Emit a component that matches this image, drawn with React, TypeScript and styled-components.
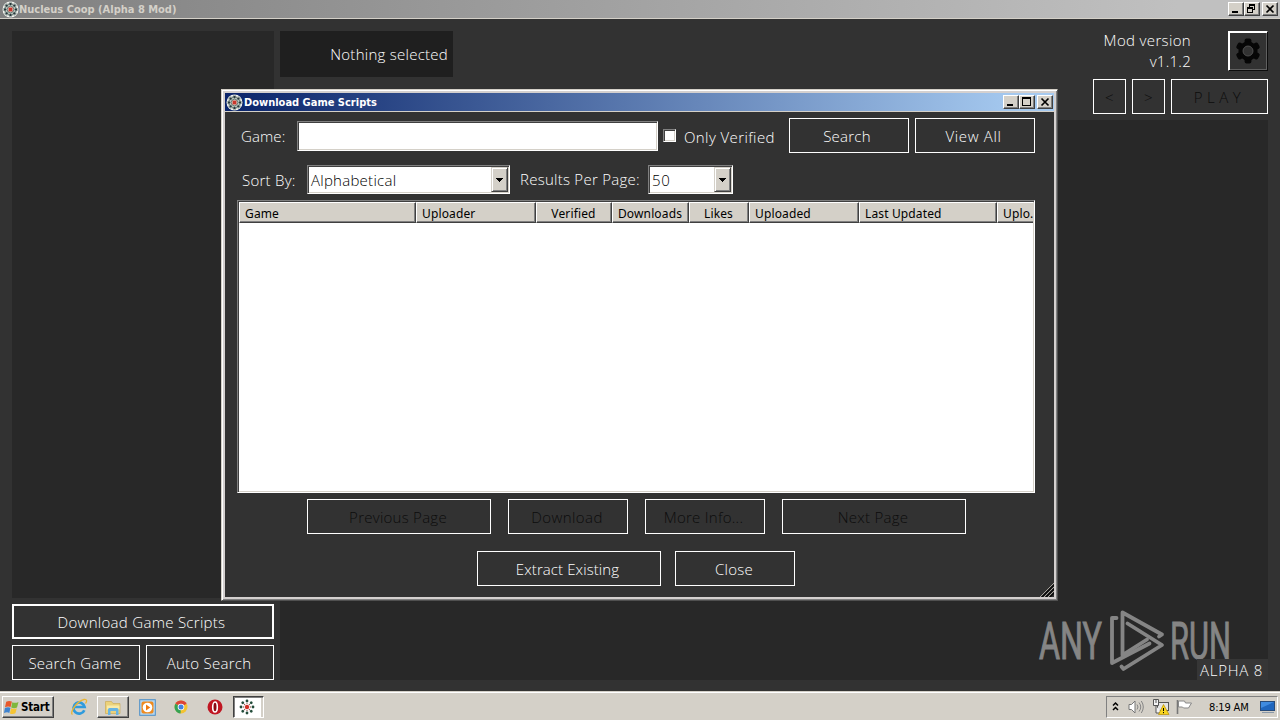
import React from 'react';
import styled, { createGlobalStyle, css } from 'styled-components';

const LIGHT = '"Open Sans", "Noto Sans", sans-serif';
const TAHOMA = '"DejaVu Sans Condensed", "DejaVu Sans", "Noto Sans", sans-serif';

const GlobalStyle = createGlobalStyle`
  * {
    box-sizing: border-box;
  }

  body {
    margin: 0;
    overflow: hidden;
    background: #323232;
  }

  button {
    padding: 0;
    margin: 0;
  }
`;

interface LabelProps {
  $spacing?: number;
  $shift?: number;
}

const Label = styled.span<LabelProps>`
  font-family: ${LIGHT};
  font-weight: 300;
  font-size: 15px;
  letter-spacing: ${({ $spacing = 0.26 }) => $spacing}px;
  margin-left: ${({ $shift = 0 }) => $shift}px;
  line-height: 20px;
  white-space: nowrap;
  color: inherit;
`;

const Desktop = styled.div`
  position: relative;
  display: flex;
  flex-direction: column;
  width: 1280px;
  height: 720px;
  overflow: hidden;
  background: #323232;
  color: #ffffff;
`;

/* Window chrome */

const TitleBar = styled.div<{ $active?: boolean }>`
  display: flex;
  align-items: center;
  flex: none;
  height: 19px;
  padding: 0 ${({ $active }) => ($active ? 1 : 2)}px;
  border-bottom: 1px solid #d4d0c8;
  background: ${({ $active }) =>
    $active
      ? 'linear-gradient(90deg, #0a246a 0%, #a6caf0 96%)'
      : 'linear-gradient(90deg, #808080 0%, #c0c0c0 92%)'};
`;

const TitleText = styled.span<{ $active?: boolean }>`
  flex: 1;
  padding-left: ${({ $active }) => ($active ? 1 : 0)}px;
  font-family: ${TAHOMA};
  font-size: 11px;
  font-weight: 700;
  line-height: 17px;
  white-space: nowrap;
  color: ${({ $active }) => ($active ? '#ffffff' : '#d4d0c8')};
`;

const CaptionGroup = styled.div`
  display: flex;
  margin-right: 2px;
`;

const CaptionButton = styled.button`
  display: block;
  width: 16px;
  height: 14px;
  border: 1px solid;
  border-color: #ffffff #404040 #404040 #ffffff;
  box-shadow: inset -1px -1px 0 #808080;
  background: #d4d0c8;

  svg {
    display: block;
  }
`;

/* Main window */

const MainBody = styled.main`
  flex: 1;
  display: flex;
  gap: 6px;
  padding: 12px 12px 11px;
`;

const Sidebar = styled.aside`
  display: flex;
  flex-direction: column;
  gap: 6px;
  width: 262px;
`;

const GameList = styled.div`
  flex: 1;
  background: #282828;
`;

const ButtonRow = styled.div`
  display: flex;
  gap: 6px;
`;

const FlatButton = styled.button<{ $width: number; $focused?: boolean }>`
  display: flex;
  align-items: center;
  justify-content: center;
  flex: none;
  width: ${({ $width }) => $width}px;
  height: 35px;
  border: ${({ $focused }) => ($focused ? 2 : 1)}px solid #ffffff;
  background: #323232;
  color: #ffffff;

  &:disabled {
    color: #0c0c0c;
  }
`;

const Content = styled.section`
  flex: 1;
  display: flex;
  flex-direction: column;
`;

const TopStrip = styled.div`
  display: flex;
  justify-content: space-between;
  height: 89px;
`;

const Selection = styled.div`
  display: flex;
  align-items: center;
  justify-content: flex-end;
  width: 173px;
  height: 46px;
  padding: 0 5px 1px 0;
  background: #1f1f1f;
`;

const HeaderTools = styled.div`
  display: flex;
  flex-direction: column;
  align-items: flex-end;
  gap: 8px;
`;

const VersionRow = styled.div`
  display: flex;
  gap: 37px;
  height: 40px;
`;

const Version = styled.div`
  display: flex;
  flex-direction: column;
  align-items: flex-end;
  gap: 1px;
  margin-top: -1px;
`;

const GearButton = styled.button`
  display: flex;
  align-items: center;
  justify-content: center;
  width: 40px;
  height: 40px;
  border: 1px solid;
  border-color: #ffffff #0c0c0c #0c0c0c #ffffff;
  box-shadow: inset 1px 1px 0 #ffffff, inset -1px -1px 0 #606060;
  background: #323232;
`;

const Canvas = styled.div`
  position: relative;
  flex: 1;
  background: #282828;
`;

const Watermark = styled.svg`
  position: absolute;
  right: 36px;
  bottom: 6px;
  overflow: visible;
`;

const VersionBadge = styled.div`
  position: absolute;
  right: 0;
  bottom: 0;
  display: flex;
  align-items: center;
  justify-content: center;
  width: 71px;
  height: 21px;
  padding: 1px 2px 0 0;
  background: #363636;
`;

/* Dialog */

const Dialog = styled.div`
  position: absolute;
  left: 221px;
  top: 89px;
  display: flex;
  flex-direction: column;
  width: 837px;
  height: 512px;
  padding: 3px;
  border: 1px solid;
  border-color: #d4d0c8 #505050 #505050 #d4d0c8;
  box-shadow: inset 1px 1px 0 #ffffff, inset -1px -1px 0 #808080, inset 0 0 0 3px #d4d0cf;
  background: #323232;
`;

const DialogBody = styled.div`
  flex: 1;
  display: flex;
  flex-direction: column;
  padding: 6px 19px 11px 12px;
`;

const SearchRow = styled.div`
  display: flex;
  align-items: center;
  height: 35px;
  padding-left: 3px;
`;

const SortRow = styled.div`
  display: flex;
  align-items: center;
  height: 29px;
  margin-top: 12px;
  padding-left: 4px;
`;

const FieldLabel = styled.div<{ $width: number; $drop?: number }>`
  display: flex;
  flex: none;
  width: ${({ $width }) => $width}px;
  margin-top: ${({ $drop = 0 }) => $drop}px;
`;

const sunken = css`
  border: 1px solid;
  border-color: #808080 #ffffff #ffffff #808080;
  box-shadow: inset 1px 1px 0 #404040, inset -1px -1px 0 #d4d0c8;
`;

const TextInput = styled.input`
  ${sunken}
  flex: none;
  width: 361px;
  height: 30px;
  padding: 0 6px;
  background: #ffffff;
  outline: none;
  font: 300 15px ${LIGHT};
`;

const CheckBox = styled.div`
  ${sunken}
  flex: none;
  width: 13px;
  height: 13px;
  margin: 0 8px 0 5px;
  background: #ffffff;
`;

const Combo = styled.div<{ $width: number }>`
  ${sunken}
  display: flex;
  align-items: center;
  justify-content: space-between;
  flex: none;
  width: ${({ $width }) => $width}px;
  height: 29px;
  padding: 1px 1px 1px 3px;
  background: #ffffff;
  color: #000000;
`;

const ComboArrow = styled.div`
  display: flex;
  align-items: center;
  justify-content: center;
  width: 17px;
  height: 25px;
  border: 1px solid;
  border-color: #d4d0c8 #404040 #404040 #d4d0c8;
  box-shadow: inset 1px 1px 0 #ffffff, inset -1px -1px 0 #808080;
  background: #d4d0c8;
`;

const Table = styled.div`
  ${sunken}
  width: 798px;
  height: 293px;
  margin-top: 6px;
  padding: 1px;
  background: #ffffff;
`;

const TableHead = styled.div`
  display: flex;
  height: 21px;
  overflow: hidden;
`;

const HeadCell = styled.div<{ $width: number; $center?: boolean }>`
  flex: none;
  display: flex;
  align-items: center;
  justify-content: ${({ $center }) => ($center ? 'center' : 'flex-start')};
  width: ${({ $width }) => $width}px;
  padding: 2px ${({ $center }) => ($center ? 1 : 0)}px 0 ${({ $center }) => ($center ? 0 : 5)}px;
  border: 1px solid;
  border-color: #ffffff #404040 #404040 #ffffff;
  box-shadow: inset -1px -1px 0 #808080;
  background: #d4d0c8;
  color: #000000;
`;

const HeadText = styled.span`
  font-family: "Noto Sans", "Open Sans", sans-serif;
  font-size: 12px;
  line-height: 16px;
  letter-spacing: 0.14px;
  white-space: nowrap;
`;

const Pager = styled.div`
  display: flex;
  gap: 17px;
  margin-top: 6px;
  padding-left: 70px;
`;

const Footer = styled.div`
  display: flex;
  gap: 14px;
  margin-top: 17px;
  padding-left: 240px;
`;

const Grip = styled.svg`
  position: absolute;
  right: 3px;
  bottom: 3px;
`;

/* Taskbar */

const Taskbar = styled.footer`
  display: flex;
  align-items: center;
  flex: none;
  height: 29px;
  padding: 2px 2px 0;
  border-top: 1px solid #d4d0c8;
  box-shadow: inset 0 1px 0 #ffffff;
  background: #d4d0c8;
  color: #000000;
`;

const StartButton = styled.button`
  display: flex;
  align-items: center;
  gap: 2px;
  width: 52px;
  height: 22px;
  padding-left: 1px;
  border: 1px solid;
  border-color: #ffffff #404040 #404040 #ffffff;
  box-shadow: inset -1px -1px 0 #808080;
  background: #d4d0c8;
  font: 700 11.5px ${TAHOMA};
  letter-spacing: -0.2px;
  color: #000000;
`;

const QuickLaunch = styled.div`
  display: flex;
  margin-left: 9px;
  gap: 2px;
`;

const TaskButton = styled.div<{ $state?: 'raised' | 'pressed' }>`
  display: flex;
  align-items: center;
  justify-content: center;
  width: 32px;
  height: 22px;
  border: 1px solid transparent;

  ${({ $state }) =>
    $state === 'raised' &&
    css`
      border-color: #ffffff #404040 #404040 #ffffff;
      box-shadow: inset -1px -1px 0 #808080;
    `}

  ${({ $state }) =>
    $state === 'pressed' &&
    css`
      width: 31px;
      border-color: #404040 #ffffff #ffffff #404040;
      box-shadow: inset 1px 1px 0 #808080, inset -2px 0 0 #d4d0c8;
      background: #ffffff;
      padding-right: 3px;
    `}
`;

const Tray = styled.div`
  display: flex;
  align-items: center;
  width: 172px;
  height: 22px;
  margin-left: auto;
  padding-left: 5px;
  border: 1px solid;
  border-color: #808080 #ffffff #ffffff #808080;
`;

const Clock = styled.span`
  width: 51px;
  margin-left: 12px;
  font-family: ${TAHOMA};
  font-size: 11px;
  letter-spacing: -0.15px;
  white-space: nowrap;
`;

const petals = [0, 45, 90, 135, 180, 225, 270, 315];

const AppIcon = () => (
  <svg width="17" height="17" viewBox="0 0 17 17">
    <circle cx="8.5" cy="8.5" r="8" fill="#f4f4f0" />
    {[0, 45, 90, 135].map((angle) => (
      <ellipse
        key={angle}
        cx="8.5"
        cy="8.5"
        rx="2.9"
        ry="7.3"
        fill="none"
        stroke="#4e665e"
        strokeWidth="0.6"
        transform={`rotate(${angle} 8.5 8.5)`}
      />
    ))}
    {petals.map((angle) => (
      <rect
        key={angle}
        x="7.4"
        y="2"
        width="2.2"
        height="2"
        fill="#26383c"
        transform={`rotate(${angle} 8.5 8.5)`}
      />
    ))}
    <rect x="6.5" y="6.5" width="4" height="4" fill="#c8382c" />
  </svg>
);

const FlowerIcon = () => (
  <svg width="16" height="16" viewBox="0 0 16 16">
    {petals.map((angle) => (
      <g key={angle} transform={`rotate(${angle} 8 8)`}>
        <circle cx="8" cy="2" r="1.4" fill="#234c3a" />
        <circle cx="8" cy="4.6" r="0.7" fill="#9a5c54" />
      </g>
    ))}
    <circle cx="8" cy="8" r="2.2" fill="#d33027" />
  </svg>
);

const MinimizeIcon = () => (
  <svg width="14" height="12" shapeRendering="crispEdges">
    <rect x="3" y="8" width="6" height="2" />
  </svg>
);

const MaximizeIcon = () => (
  <svg width="14" height="12" shapeRendering="crispEdges">
    <path d="M2 1h9v9h-9zM3 3v6h7v-6z" fillRule="evenodd" />
  </svg>
);

const RestoreIcon = () => (
  <svg width="14" height="12" shapeRendering="crispEdges">
    <path d="M4 1h6v6h-2v-1h1v-3h-4v1h-1zM2 4h6v6h-6zM3 6v3h4v-3z" fillRule="evenodd" />
  </svg>
);

const CloseIcon = () => (
  <svg width="14" height="12">
    <path d="M3.5 2.5l7 7M10.5 2.5l-7 7" stroke="#000" strokeWidth="1.7" />
  </svg>
);

const GearIcon = () => (
  <svg width="26" height="26" viewBox="0 0 26 26">
    {[0, 60, 120].map((angle) => (
      <rect
        key={angle}
        x="9.6"
        y="0.6"
        width="6.8"
        height="24.8"
        rx="2"
        fill="#060606"
        transform={`rotate(${angle} 13 13)`}
      />
    ))}
    <circle cx="13" cy="13" r="9.6" fill="#060606" />
    <circle cx="13" cy="13" r="5" fill="#323232" stroke="#5a5a5a" strokeWidth="0.8" />
  </svg>
);

const Arrow = () => (
  <svg width="8" height="4" viewBox="0 0 8 4" shapeRendering="crispEdges">
    <path d="M0 0h7v1h-1v1h-1v1h-1v1h-1v-1h-1v-1h-1v-1h-1z" />
  </svg>
);

const AnyRun = () => (
  <Watermark width="196" height="66" viewBox="1036 608 196 66">
    <g fill="#858585" stroke="#858585" strokeWidth="1" fontFamily="Roboto, sans-serif" fontSize="51">
      <text x="1039" y="659" textLength="63" lengthAdjust="spacingAndGlyphs">
        ANY
      </text>
      <text x="1170" y="659" textLength="61" lengthAdjust="spacingAndGlyphs">
        RUN
      </text>
    </g>
    <g fill="none" stroke="#858585" strokeWidth="3.8" strokeLinejoin="round" strokeLinecap="round">
      <path d="M1116.500 618H1112V663L1149.500 643.500" />
      <path d="M1147 639.500L1122.500 655V612.500L1162 634.500L1159 636.500" />
      <path d="M1127.500 623.500L1162 645L1123.500 669L1121.500 666.500" />
    </g>
  </Watermark>
);

const StartLogo = () => (
  <svg width="15" height="15" viewBox="0 0 15 15">
    <path d="M2.200 1.800Q5 0.200 7.900 1.600L6.600 7Q4 5.800 1 7.300z" fill="#e8592c" />
    <path d="M8.300 2.200Q11 3.600 14.500 2L13 7.600Q10 8.800 7.200 7.500z" fill="#7fb73c" />
    <path d="M0.900 8Q4 6.600 6.500 7.800L5.300 12.900Q3 11.600 0 13.100z" fill="#3f83cf" />
    <path d="M7.100 8.200Q10 9.500 12.800 8.200L11.400 13.300Q8.800 14.700 5.900 13.400z" fill="#f5c433" />
  </svg>
);

const ExplorerIcon = () => (
  <svg width="18" height="18" viewBox="0 0 18 18">
    <path d="M14.3 12.2A5.6 5.6 0 1 1 14.6 9H5" fill="none" stroke="#2f9bdd" strokeWidth="2.7" />
    <path d="M2.5 16.500C-1 15 7 3 14 1.500C18 1 16.500 4 15.500 5.500" fill="none" stroke="#e9b534" strokeWidth="1.3" />
  </svg>
);

const FolderIcon = () => (
  <svg width="18" height="17" viewBox="0 0 18 17">
    <path d="M1.500 2.500h6l1.500 2h7v10h-14.500z" fill="#ecd27a" stroke="#c9a64a" strokeWidth="0.6" />
    <path d="M3 6.500h12.500v4h-12.500z" fill="#f8eaa8" />
    <path d="M4 16v-5.500q0-1.500 1.500-1.500h7.500q1.500 0 1.500 1.500v5.500h-2.500v-4h-5.500v4z" fill="#68b4e2" />
  </svg>
);

const PlayerIcon = () => (
  <svg width="17" height="17" viewBox="0 0 17 17">
    <rect x="0.7" y="0.7" width="15.6" height="15.6" fill="#b5d5ee" stroke="#4d8fc8" />
    <rect x="2.500" y="2.500" width="12" height="12" rx="2" fill="#ef8a1e" />
    <circle cx="8.500" cy="8.500" r="4.800" fill="#fff" />
    <path d="M7 5.500l4.300 3-4.300 3z" fill="#ef7a10" />
  </svg>
);

const ChromeIcon = () => (
  <svg width="14" height="14" viewBox="0 0 14 14">
    <circle cx="7" cy="7" r="6.500" fill="#f3c331" />
    <path d="M7 7L1.400 3.700A6.500 6.500 0 0 1 12.600 3.700z" fill="#dc4437" />
    <path d="M7 7L1.400 3.700A6.500 6.500 0 0 0 6.500 13.500z" fill="#35a254" />
    <circle cx="7" cy="7" r="3.300" fill="#fff" />
    <circle cx="7" cy="7" r="2.500" fill="#4382e0" />
  </svg>
);

const OperaIcon = () => (
  <svg width="16" height="16" viewBox="0 0 16 16">
    <circle cx="8" cy="8" r="7.500" fill="#c01622" />
    <ellipse cx="8" cy="8" rx="2.300" ry="5" fill="#8c0a14" stroke="#fff" strokeWidth="1.600" />
  </svg>
);

const TrayIcons = () => (
  <svg width="85" height="18" viewBox="0 0 85 18">
    <path d="M1 7.500l2.500-2.500L6 7.500M1 12l2.500-2.500L6 12" fill="none" stroke="#000" strokeWidth="1.500" />
    <path d="M17 6.500h2.500L23 3v12l-3.500-3.500H17z" fill="#fff" stroke="#777" />
    <path d="M25 6.500q2 2.500 0 5M27 4.500q3.500 4.500 0 9M29.300 3q4 6 0 12" fill="none" stroke="#858585" />
    <rect x="45.500" y="4.500" width="11" height="8" fill="#e3e3e3" stroke="#555" />
    <path d="M41.500 1.500h5v6h-5zM44 8v7h6" fill="#f4f4f4" stroke="#555" />
    <path d="M44 1v4" stroke="#555" />
    <path d="M51.500 6.500l5.500 10h-10.500z" fill="#f8d51e" stroke="#b78c00" strokeWidth="0.700" />
    <path d="M51.500 10v3M51.500 14v1.200" stroke="#000" />
    <path d="M65.500 2v14" stroke="#777" strokeWidth="1.600" />
    <path d="M66.500 3h6l1 2h6l-3 5h-5l-1-1h-4z" fill="#fff" stroke="#888" />
  </svg>
);

const DesktopIcon = () => (
  <svg width="17" height="16" viewBox="0 0 17 16">
    <rect x="0.500" y="2.500" width="14" height="9" fill="#1f66be" stroke="#284b79" />
    <path d="M1 3h13L1 9z" fill="#3f8be0" />
    <path d="M2 13.500h12" stroke="#8a98a8" />
  </svg>
);

interface TextButtonProps {
  width: number;
  text: string;
  spacing?: number;
  shift?: number;
  disabled?: boolean;
  focused?: boolean;
}

const TextButton: React.FC<TextButtonProps> = ({ width, text, spacing, shift, disabled, focused }) => (
  <FlatButton $width={width} $focused={focused} disabled={disabled}>
    <Label $spacing={spacing} $shift={shift}>
      {text}
    </Label>
  </FlatButton>
);

const columns = [
  { title: 'Game', width: 177 },
  { title: 'Uploader', width: 120 },
  { title: 'Verified', width: 76, center: true },
  { title: 'Downloads', width: 77, center: true },
  { title: 'Likes', width: 60, center: true },
  { title: 'Uploaded', width: 110 },
  { title: 'Last Updated', width: 138 },
  { title: 'Uplo...', width: 60 },
];

const DownloadDialog = () => (
  <Dialog>
    <TitleBar $active>
      <AppIcon />
      <TitleText $active>Download Game Scripts</TitleText>
      <CaptionGroup>
        <CaptionButton>
          <MinimizeIcon />
        </CaptionButton>
        <CaptionButton>
          <MaximizeIcon />
        </CaptionButton>
      </CaptionGroup>
      <CaptionButton>
        <CloseIcon />
      </CaptionButton>
    </TitleBar>
    <DialogBody>
      <SearchRow>
        <FieldLabel $width={57}>
          <Label $shift={1} $spacing={0.1}>
            Game:
          </Label>
        </FieldLabel>
        <TextInput />
        <CheckBox />
        <FieldLabel $width={105} $drop={2}>
          <Label $spacing={0.4}>Only Verified</Label>
        </FieldLabel>
        <ButtonRow>
          <TextButton width={120} text="Search" shift={-4} />
          <TextButton width={120} text="View All" shift={-3} spacing={0.65} />
        </ButtonRow>
      </SearchRow>
      <SortRow>
        <FieldLabel $width={66}>
          <Label $shift={1}>Sort By:</Label>
        </FieldLabel>
        <Combo $width={203}>
          <Label>Alphabetical</Label>
          <ComboArrow>
            <Arrow />
          </ComboArrow>
        </Combo>
        <FieldLabel $width={138} $drop={-1}>
          <Label $shift={10}>Results Per Page:</Label>
        </FieldLabel>
        <Combo $width={85}>
          <Label $spacing={0.6}>50</Label>
          <ComboArrow>
            <Arrow />
          </ComboArrow>
        </Combo>
      </SortRow>
      <Table>
        <TableHead>
          {columns.map((column) => (
            <HeadCell key={column.title} $width={column.width} $center={column.center}>
              <HeadText>{column.title}</HeadText>
            </HeadCell>
          ))}
        </TableHead>
      </Table>
      <Pager>
        <TextButton width={184} text="Previous Page" disabled shift={-2} />
        <TextButton width={120} text="Download" disabled shift={-2} spacing={0.45} />
        <TextButton width={120} text="More Info..." disabled shift={-3} />
        <TextButton width={184} text="Next Page" disabled shift={-2} />
      </Pager>
      <Footer>
        <TextButton width={184} text="Extract Existing" shift={-3} spacing={0.1} />
        <TextButton width={120} text="Close" shift={-2} />
      </Footer>
    </DialogBody>
    <Grip width="14" height="14" viewBox="0 0 14 14">
      <path d="M0 14L14 0M4 14L14 4M8 14L14 8" stroke="#b4b0a8" strokeWidth="0.900" />
      <path d="M2 14L14 2M6 14L14 6M10 14L14 10" stroke="#0a0a0a" strokeWidth="1.300" />
    </Grip>
  </Dialog>
);

const App: React.FC = () => {
  return (
    <>
      <GlobalStyle />
      <Desktop>
        <TitleBar>
          <AppIcon />
          <TitleText>Nucleus Coop (Alpha 8 Mod)</TitleText>
          <CaptionGroup>
            <CaptionButton>
              <MinimizeIcon />
            </CaptionButton>
            <CaptionButton>
              <RestoreIcon />
            </CaptionButton>
          </CaptionGroup>
          <CaptionButton>
            <CloseIcon />
          </CaptionButton>
        </TitleBar>

        <MainBody>
          <Sidebar>
            <GameList />
            <TextButton width={262} text="Download Game Scripts" focused shift={-3} spacing={0.29} />
            <ButtonRow>
              <TextButton width={128} text="Search Game" shift={-2} />
              <TextButton width={128} text="Auto Search" shift={-2} />
            </ButtonRow>
          </Sidebar>
          <Content>
            <TopStrip>
              <Selection>
                <Label>Nothing selected</Label>
              </Selection>
              <HeaderTools>
                <VersionRow>
                  <Version>
                    <Label $spacing={0.35}>Mod version</Label>
                    <Label>v1.1.2</Label>
                  </Version>
                  <GearButton>
                    <GearIcon />
                  </GearButton>
                </VersionRow>
                <ButtonRow>
                  <TextButton width={33} text="<" disabled />
                  <TextButton width={33} text=">" disabled />
                  <TextButton width={97} text="PLAY" spacing={4.5} disabled />
                </ButtonRow>
              </HeaderTools>
            </TopStrip>
            <Canvas>
              <AnyRun />
              <VersionBadge>
                <Label $spacing={0.75}>ALPHA 8</Label>
              </VersionBadge>
            </Canvas>
          </Content>
        </MainBody>

        <Taskbar>
          <StartButton>
            <StartLogo />
            Start
          </StartButton>
          <QuickLaunch>
            <TaskButton>
              <ExplorerIcon />
            </TaskButton>
            <TaskButton $state="raised">
              <FolderIcon />
            </TaskButton>
            <TaskButton>
              <PlayerIcon />
            </TaskButton>
            <TaskButton>
              <ChromeIcon />
            </TaskButton>
            <TaskButton>
              <OperaIcon />
            </TaskButton>
            <TaskButton $state="pressed">
              <FlowerIcon />
            </TaskButton>
          </QuickLaunch>
          <Tray>
            <TrayIcons />
            <Clock>8:19 AM</Clock>
            <DesktopIcon />
          </Tray>
        </Taskbar>

        <DownloadDialog />
      </Desktop>
    </>
  );
};

export default App;
